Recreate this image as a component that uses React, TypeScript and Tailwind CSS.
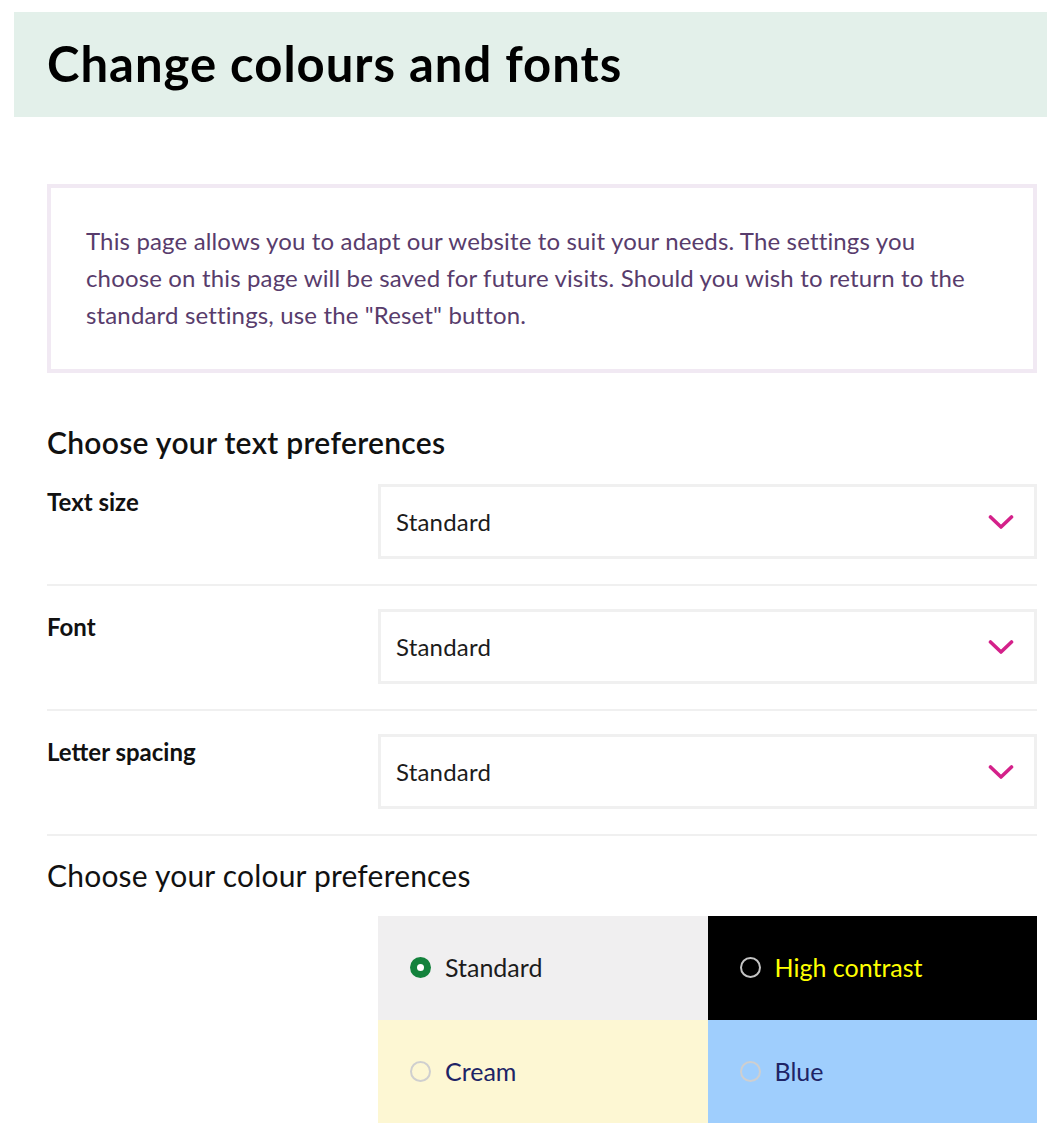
import React from 'react'

const selects = [
  { label: 'Text size', value: 'Standard' },
  { label: 'Font', value: 'Standard' },
  { label: 'Letter spacing', value: 'Standard' },
]

const themes = [
  { name: 'Standard', bg: 'bg-[#f0eff0]', text: 'text-[#1c1c1c]', radio: 'checked' },
  { name: 'High contrast', bg: 'bg-black', text: 'text-[#ffff00]', radio: 'dark' },
  { name: 'Cream', bg: 'bg-[#fdf7d3]', text: 'text-[#1e2466]', radio: 'light' },
  { name: 'Blue', bg: 'bg-[#9fcefd]', text: 'text-[#1e2466]', radio: 'light' },
]

function Chevron() {
  return (
    <svg width="26" height="16" viewBox="0 0 26 16" fill="none">
      <path d="M2.5 3l10.5 10 10.5-10" stroke="#d4218a" strokeWidth="3.6" strokeLinecap="round" strokeLinejoin="round" />
    </svg>
  )
}

function Radio({ kind }: { kind: string }) {
  if (kind === 'checked') {
    return (
      <span className="w-[21px] h-[21px] rounded-full bg-[#13823c] flex items-center justify-center">
        <span className="w-[7px] h-[7px] rounded-full bg-white" />
      </span>
    )
  }
  return (
    <span
      className={
        kind === 'dark'
          ? 'w-[21px] h-[21px] rounded-full border-2 border-[#c4c4c4]'
          : 'w-[21px] h-[21px] rounded-full border-2 border-[#cfcfcf]'
      }
    />
  )
}

export default function App() {
  return (
    <div className="min-h-screen bg-white pt-[12px] pl-[14px] pb-[10px]" style={{ fontFamily: 'Lato, "Open Sans", sans-serif' }}>
      {/* Header */}
      <div className="h-[105px] bg-[#e3f0ea] flex items-center pl-[33px]">
        <h1 className="text-[49px] tracking-[1px] font-bold text-black leading-none pb-[2px]">Change colours and fonts</h1>
      </div>

      <div className="ml-[33px] w-[990px]">
        {/* Intro */}
        <div className="mt-[67px] h-[189px] border-4 border-[#f1e9f3] pl-[35px] pr-[56px] pt-[34px]">
          <p className="text-[24px] tracking-[0.15px] leading-[37px] text-[#583c6c]">
            This page allows you to adapt our website to suit your needs. The settings you choose on this page will be saved for future visits. Should you wish to return to the standard settings, use the "Reset" button.
          </p>
        </div>

        {/* Text preferences */}
        <h2 className="mt-[50px] text-[30px] tracking-[0.3px] leading-[38px] font-semibold text-[#111]">Choose your text preferences</h2>

        <div className="mt-[23px]">
          {selects.map((s, i) => (
            <div key={s.label} className={i > 0 ? 'mt-[23px]' : ''}>
              <div className="flex">
                <div className="w-[331px] pt-[4px] text-[24px] leading-[28px] font-bold text-[#111]">{s.label}</div>
                <div className="w-[659px] h-[75px] border-[3px] border-[#f0f0f0] flex items-center justify-between pl-[15px] pr-[20px]">
                  <span className="text-[24px] tracking-[0.2px] text-[#1c1c1c]">{s.value}</span>
                  <Chevron />
                </div>
              </div>
              <div className="mt-[25px] h-[2px] bg-[#f0f0f0]" />
            </div>
          ))}
        </div>

        {/* Colour preferences */}
        <h2 className="mt-[20px] text-[30px] tracking-[0.2px] leading-[38px] font-normal text-[#111]">Choose your colour preferences</h2>

        <div className="mt-[22px] ml-[331px] grid grid-cols-2">
          {themes.map((t) => (
            <div key={t.name} className={`${t.bg} h-[103.5px] flex items-center pl-[32px] gap-[14px]`}>
              <Radio kind={t.radio} />
              <span className={`text-[25px] ${t.text}`}>{t.name}</span>
            </div>
          ))}
        </div>
      </div>
    </div>
  )
}
